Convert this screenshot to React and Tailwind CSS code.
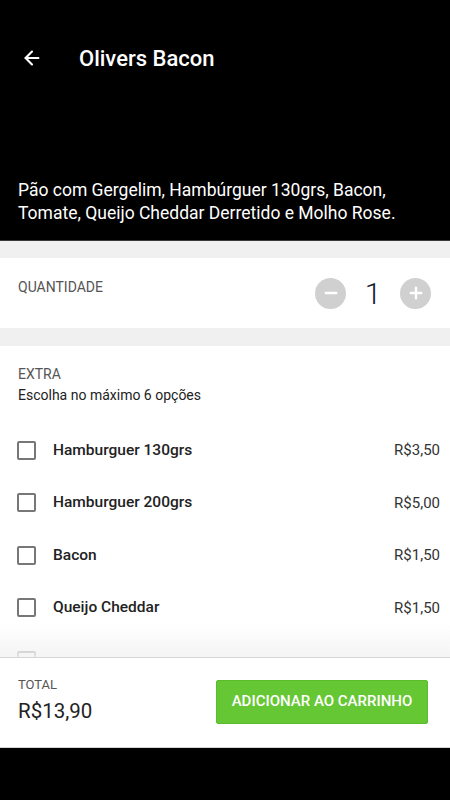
import { ArrowLeft, Minus, Plus } from "lucide-react";

const extras = [
  { name: "Hamburguer 130grs", price: "R$3,50" },
  { name: "Hamburguer 200grs", price: "R$5,00" },
  { name: "Bacon", price: "R$1,50" },
  { name: "Queijo Cheddar", price: "R$1,50" },
];

export default function App() {
  return (
    <div className="flex h-[800px] w-[450px] flex-col overflow-hidden bg-[#f0f0f0] font-['Roboto',sans-serif]">
      <header className="flex h-[241px] shrink-0 flex-col justify-between border-b border-[#3a3a3a] bg-black pb-[15px] text-white">
        <div className="flex h-[116px] items-center pl-[21px]">
          <ArrowLeft className="h-[22px] w-[22px]" strokeWidth={2.3} />
          <h1 className="ml-[36px] text-[22px] font-medium">Olivers Bacon</h1>
        </div>
        <p className="px-[18px] text-[17.5px] leading-[23px]">
          Pão com Gergelim, Hambúrguer 130grs, Bacon, Tomate, Queijo Cheddar Derretido e Molho Rose.
        </p>
      </header>

      <section className="mt-[17px] flex h-[70px] shrink-0 items-center justify-between bg-white pl-[18px] pr-[19px]">
        <span className="-mt-[12px] text-[14px] text-[#555]">QUANTIDADE</span>
        <div className="flex items-center">
          <button type="button" className="flex h-[31px] w-[31px] items-center justify-center rounded-full bg-[#d0d0d0] text-white">
            <Minus className="h-[18px] w-[18px]" strokeWidth={3.2} />
          </button>
          <span className="w-[54px] text-center text-[30px] font-light text-[#13202e]">1</span>
          <button type="button" className="flex h-[31px] w-[31px] items-center justify-center rounded-full bg-[#d0d0d0] text-white">
            <Plus className="h-[18px] w-[18px]" strokeWidth={3.2} />
          </button>
        </div>
      </section>

      <section className="relative mt-[18px] flex min-h-0 flex-1 flex-col overflow-hidden bg-white">
        <div className="px-[18px] pt-[18px]">
          <div className="text-[14px] leading-[21px] text-[#555]">EXTRA</div>
          <div className="text-[14px] leading-[21px] text-[#222]">Escolha no máximo 6 opções</div>
        </div>
        <ul className="mt-[18px]">
          {extras.map((item) => (
            <li key={item.name} className="flex h-[52.5px] items-center pl-[17px] pr-[10px]">
              <span className="h-[19px] w-[19px] rounded-[2px] border-2 border-[#777]" />
              <span className="ml-[17px] flex-1 text-[15.5px] font-medium text-[#222]">{item.name}</span>
              <span className="text-[15px] text-[#333]">{item.price}</span>
            </li>
          ))}
          <li className="flex h-[52.5px] items-center pl-[17px]">
            <span className="h-[19px] w-[19px] rounded-[2px] border-2 border-[#777]" />
          </li>
        </ul>
        <div className="pointer-events-none absolute inset-x-0 bottom-0 h-[34px] bg-gradient-to-b from-white/0 to-[#f3f3f3]/90" />
      </section>

      <footer className="flex h-[91px] shrink-0 items-center justify-between border-y border-[#d6d6d6] bg-white pl-[18px] pr-[22px]">
        <div className="-mt-[6px]">
          <div className="text-[13px] leading-[18px] text-[#555]">TOTAL</div>
          <div className="mt-[5px] text-[20.5px] leading-[24px] text-[#222]">R$13,90</div>
        </div>
        <button
          type="button"
          className="-mt-[2px] h-[44px] w-[212px] rounded-[2px] border border-[#5cbd2c] bg-[#66c734] text-[15px] font-medium text-white"
        >
          ADICIONAR AO CARRINHO
        </button>
      </footer>

      <div className="h-[52px] shrink-0 bg-black" />
    </div>
  );
}
